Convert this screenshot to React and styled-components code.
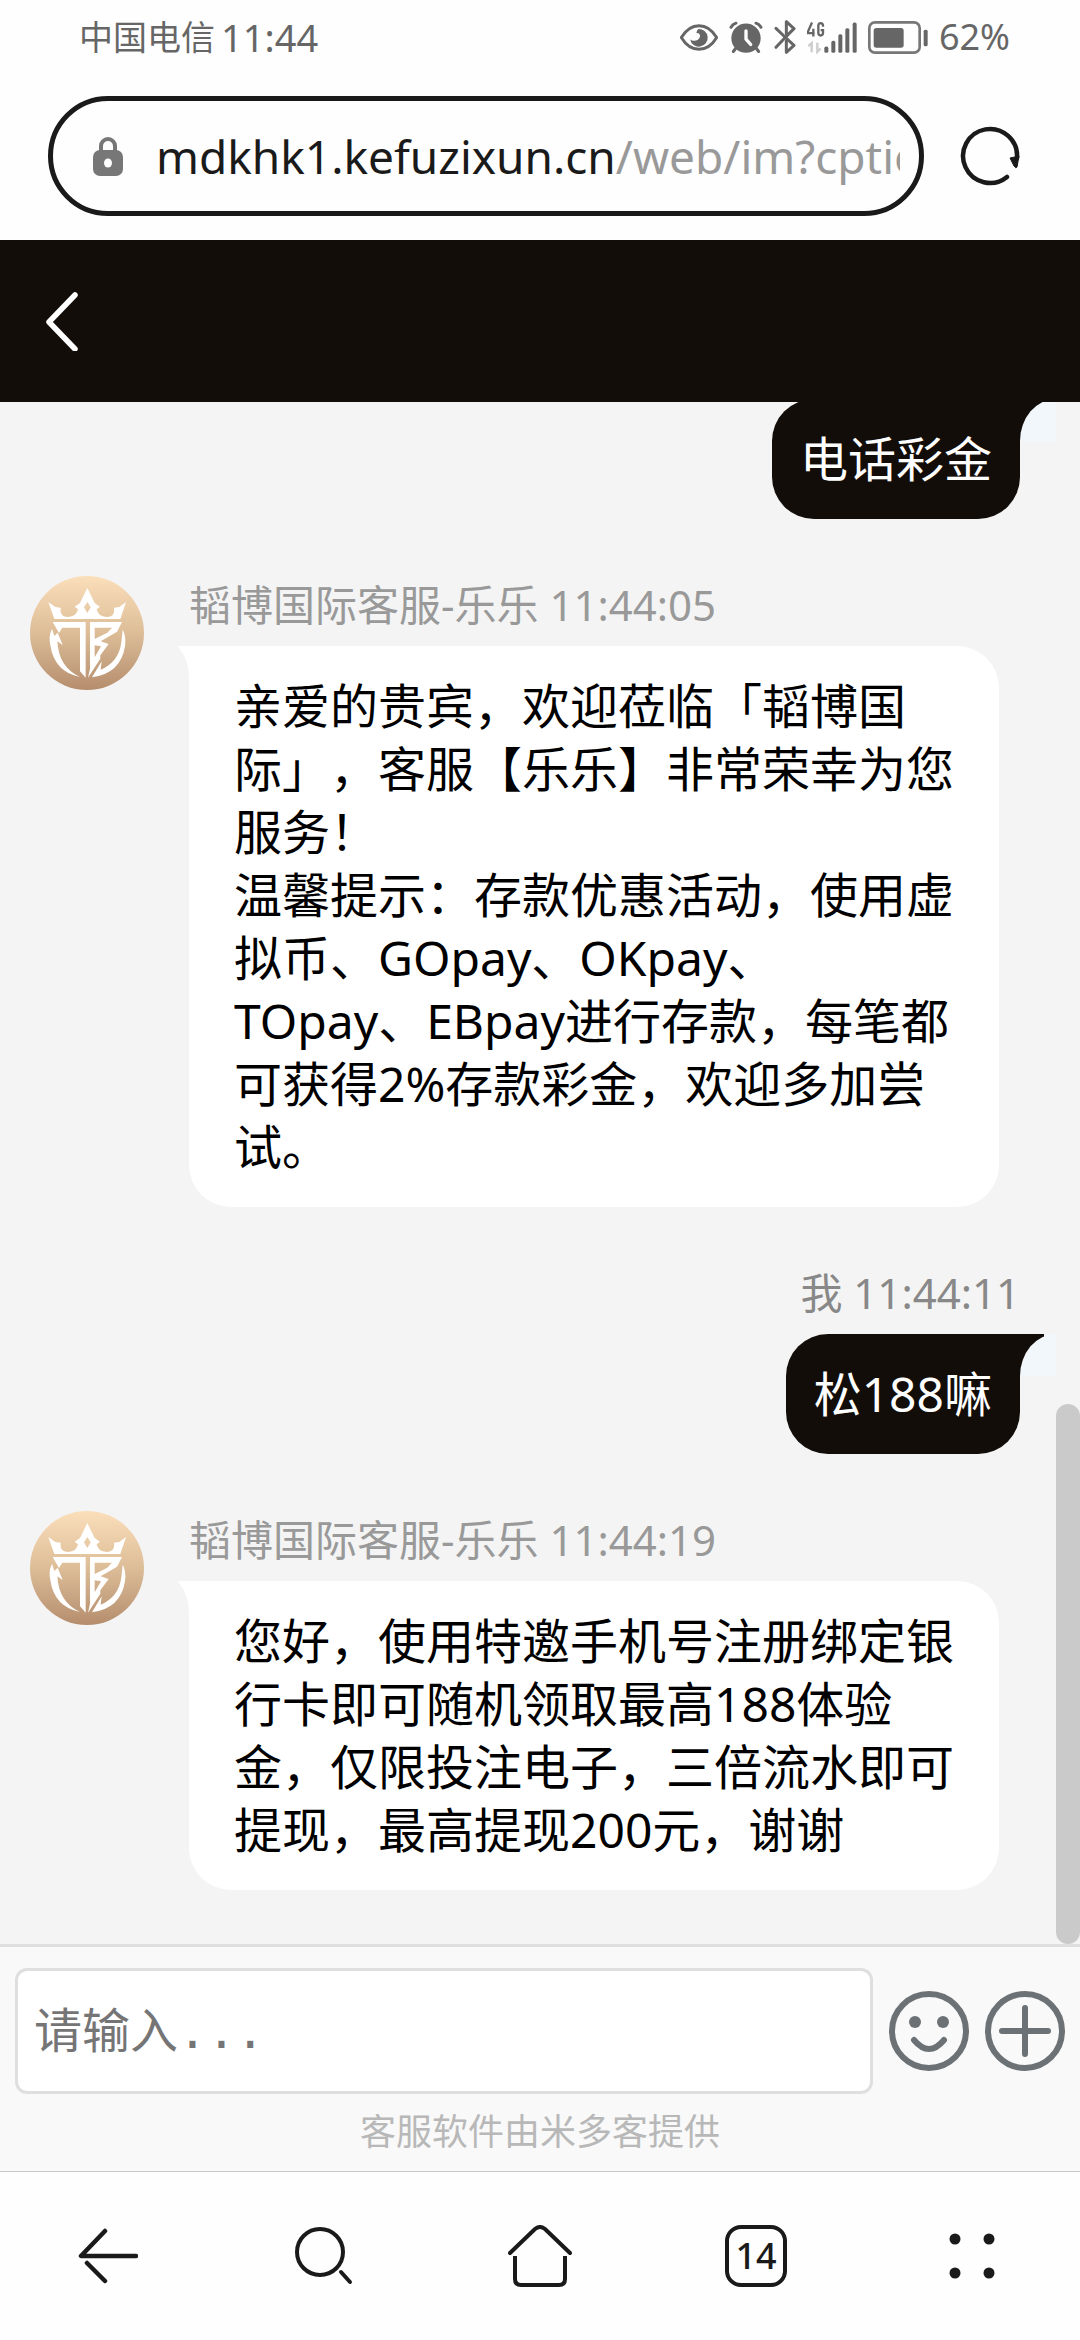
import React from "react";
import styled, { createGlobalStyle } from "styled-components";

const GlobalStyle = createGlobalStyle`
  *, *::before, *::after { box-sizing: border-box; }
  body {
    margin: 0;
    background: #fefefe;
    font-family: "Noto Sans", "Noto Sans CJK SC", sans-serif;
    text-spacing-trim: space-all;
  }
  button {
    margin: 0;
    padding: 0;
    border: 0;
    background: none;
    font: inherit;
    color: inherit;
    cursor: pointer;
  }
  svg { display: block; flex: none; }
`;

const Screen = styled.div`
  display: flex;
  flex-direction: column;
  height: 100vh;
  overflow: hidden;
`;

/* ---------- system status ---------- */

const StatusBar = styled.div`
  display: flex;
  align-items: center;
  justify-content: space-between;
  height: 74px;
  flex: none;
  padding: 0 70px 0 79px;
  color: #666;
`;

const StatusGroup = styled.div`
  display: flex;
  align-items: center;
  gap: ${(p) => p.$gap}px;
`;

const Carrier = styled.span`
  font-size: 34px;
  line-height: 48px;
`;

const Clock = styled.time`
  font-size: 38px;
  line-height: 48px;
`;

const BatteryLevel = styled.span`
  font-size: 36px;
  line-height: 48px;
`;

/* ---------- address bar ---------- */

const AddressRow = styled.div`
  display: flex;
  align-items: center;
  gap: 36px;
  flex: none;
  padding: 22px 60px 24px 48px;
`;

const AddressBox = styled.button`
  flex: 1;
  min-width: 0;
  display: flex;
  align-items: center;
  gap: 33px;
  height: 120px;
  padding: 0 19px 0 40px;
  border: 5px solid #1a1a1a;
  border-radius: 60px;
  text-align: left;
`;

const Url = styled.span`
  flex: 1;
  min-width: 0;
  overflow: hidden;
  white-space: nowrap;
  font-size: 46px;
  line-height: 64px;
  color: #999;
`;

const Host = styled.span`
  color: #1a1a1a;
`;

const ReloadButton = styled.button`
  flex: none;
`;

/* ---------- chat ---------- */

const ChatHeader = styled.header`
  display: flex;
  align-items: center;
  flex: none;
  height: 162px;
  padding: 0 46px;
  background: #120d09;
`;

const Conversation = styled.main`
  position: relative;
  flex: 1;
  min-height: 0;
  display: flex;
  flex-direction: column;
  justify-content: flex-end;
  gap: 57px;
  overflow: hidden;
  padding: 0 60px 54px 30px;
  background: #f4f4f4;
`;

const ScrollThumb = styled.div`
  position: absolute;
  right: 0;
  bottom: 0;
  width: 24px;
  height: 35%;
  border-radius: 12px;
  background: #cacaca;
`;

const Message = styled.article`
  display: flex;
  flex: none;
  align-items: flex-start;
  gap: 45px;
  justify-content: ${(p) => (p.$mine ? "flex-end" : "flex-start")};
`;

const MessageBody = styled.div`
  display: flex;
  flex-direction: column;
  gap: 12px;
  min-width: 0;
  align-items: ${(p) => (p.$mine ? "flex-end" : "flex-start")};
`;

const Sender = styled.div`
  font-size: 42px;
  line-height: 58px;
  color: ${(p) => (p.$mine ? "#888" : "#999")};
`;

const BubbleBase = styled.div`
  position: relative;
  font-size: 48px;
  line-height: 63px;

  &::before,
  &::after {
    content: "";
    position: absolute;
  }
`;

const AgentBubble = styled(BubbleBase)`
  max-width: 810px;
  padding: 28px 45px 29px;
  border-radius: 0 42px 42px 42px;
  background: #fff;
  color: #000;

  &::before {
    top: 0;
    left: -12px;
    width: 12px;
    height: 31px;
    background: #fff;
  }
  &::after {
    top: -11px;
    left: -36px;
    width: 36px;
    height: 42px;
    border-top-right-radius: 100%;
    background: #f4f4f4;
  }
`;

const MyBubble = styled(BubbleBase)`
  padding: 28px 28px 29px;
  border-radius: 42px 0 42px 42px;
  background: #120d09;
  color: #fff;

  &::before {
    top: 0;
    right: -24px;
    width: 24px;
    height: 42px;
    background: #120d09;
  }
  &::after {
    top: 0;
    right: -36px;
    width: 36px;
    height: 42px;
    border-top-left-radius: 100%;
    background: #f2f7fc;
  }
`;

/* ---------- composer ---------- */

const Composer = styled.form`
  flex: none;
  padding: 21px 15px 17px;
  border-top: 3px solid #dfdfdf;
  background: #f9f9f9;
`;

const ComposerRow = styled.div`
  display: flex;
  align-items: center;
  gap: 16px;
`;

const MessageInput = styled.textarea`
  flex: 1;
  min-width: 0;
  height: 126px;
  margin: 0;
  padding: 28px 16px;
  border: 3px solid #dfdfdf;
  border-radius: 12px;
  background: #fff;
  resize: none;
  outline: none;
  overflow: hidden;
  font-family: "DejaVu Sans Mono", "Noto Sans CJK SC", monospace;
  font-size: 48px;
  line-height: 64px;

  &::placeholder {
    color: #757575;
    opacity: 1;
  }
`;

const Provider = styled.div`
  margin-top: 16px;
  text-align: center;
  font-size: 36px;
  line-height: 44px;
  color: #b8b8b8;
`;

/* ---------- browser navigation ---------- */

const BrowserNav = styled.nav`
  display: grid;
  grid-template-columns: repeat(5, 1fr);
  flex: none;
  height: 169px;
  border-top: 1px solid #c8c8c8;
  background: #fefefe;
`;

const NavButton = styled.button`
  display: flex;
  align-items: center;
  justify-content: center;
`;

const TabCount = styled.span`
  display: flex;
  align-items: center;
  justify-content: center;
  width: 62px;
  height: 62px;
  border: 4px solid #1a1a1a;
  border-radius: 16px;
  font-size: 36px;
  line-height: 48px;
  font-weight: 500;
  color: #1a1a1a;
`;

/* ---------- drawings ---------- */

const EyeIcon = () => (
  <svg width="38" height="27" viewBox="62 37 116 82" fill="none">
    <path d="M66 78C95 30 145 30 174 78C145 126 95 126 66 78Z" stroke="#666" strokeWidth="9" strokeLinejoin="round" />
    <path d="M118 52A27 27 0 1 1 93 84C103 92 121 88 123 75C124 66 118 64 112 64Q113 56 118 52Z" fill="#666" />
  </svg>
);

const AlarmIcon = () => (
  <svg width="34" height="33" viewBox="210 29 102 98" fill="none">
    <circle cx="261" cy="80" r="44" fill="#666" />
    <path d="M216 47Q221 38 231 35M306 47Q301 38 291 35" stroke="#666" strokeWidth="9" strokeLinecap="round" />
    <path d="M232 108L223 120M290 108L299 120" stroke="#666" strokeWidth="9" strokeLinecap="round" />
    <path d="M261 58V83L275 99" stroke="#fefefe" strokeWidth="10" strokeLinecap="round" strokeLinejoin="round" />
  </svg>
);

const BluetoothIcon = () => (
  <svg width="22" height="36" viewBox="342 24 66 108" fill="none" stroke="#666" strokeWidth="9" strokeLinecap="round" strokeLinejoin="round">
    <path d="M348 52L375 78L402 103L379 124V90M348 109L375 80L402 53L379 32V68" />
  </svg>
);

const SignalIcon = () => (
  <svg width="50" height="33" viewBox="443 29 150 98">
    <path d="M458 33L446 60V65H466M462 52V75" fill="none" stroke="#666" strokeWidth="7" />
    <path d="M491 46V43Q491 35 484 35Q477 35 477 43V64Q477 72 484 72Q491 72 491 64V56H484" fill="none" stroke="#666" strokeWidth="7" />
    <path d="M447 104L457 95V122M474 94V121L484 111" fill="none" stroke="#ccc" strokeWidth="7" />
    <g fill="#666">
      <rect x="495" y="105" width="12" height="19" rx="5" />
      <rect x="516" y="88" width="12" height="36" rx="5" />
      <rect x="537" y="68" width="12" height="56" rx="5" />
      <rect x="558" y="50" width="12" height="74" rx="5" />
      <rect x="580" y="33" width="12" height="91" rx="5" />
    </g>
  </svg>
);

const BatteryIcon = () => (
  <svg width="60" height="33" viewBox="628 29 180 99">
    <rect x="632" y="33" width="151" height="91" rx="17" fill="none" stroke="#777" strokeWidth="8" />
    <rect x="645" y="50" width="90" height="59" rx="8" fill="#666" />
    <rect x="795" y="55" width="12" height="50" rx="5" fill="#666" />
  </svg>
);

const LockIcon = () => (
  <svg width="30" height="40" viewBox="0 0 30 40">
    <path d="M8 17V10a7 7 0 0 1 14 0V17" fill="none" stroke="#777" strokeWidth="4" />
    <rect x="0" y="14" width="30" height="26" rx="7" fill="#777" />
    <ellipse cx="15" cy="27" rx="4" ry="4.5" fill="#fefefe" />
  </svg>
);

const ReloadIcon = () => (
  <svg width="60" height="60" viewBox="0 0 60 60">
    <path d="M47 51A27 27 0 1 1 57 32" fill="none" stroke="#1a1a1a" strokeWidth="4.5" strokeLinecap="round" />
    <path d="M50 32L59 30L57 41Q56 43 54 40Z" fill="#1a1a1a" stroke="#1a1a1a" strokeWidth="1" strokeLinejoin="round" />
  </svg>
);

const ChevronIcon = () => (
  <svg width="32" height="60" viewBox="0 0 32 60" fill="none" stroke="#fff" strokeWidth="5.5" strokeLinecap="round" strokeLinejoin="round">
    <path d="M29 4L3 31L29 58" />
  </svg>
);

const Avatar = ({ id }) => (
  <svg width="114" height="114" viewBox="90 92 342 342" role="img" aria-label="韬博国际客服">
    <defs>
      <linearGradient id={id} x1="0" y1="0" x2="0" y2="1">
        <stop offset="0" stopColor="#fbdfba" />
        <stop offset="0.5" stopColor="#dcbd98" />
        <stop offset="1" stopColor="#b58d6d" />
      </linearGradient>
    </defs>
    <circle cx="261" cy="263" r="171" fill={`url(#${id})`} />
    <g fill="#fff">
      <path fillRule="evenodd" d="M145 170L166 185L182 187Q178 214 204 215Q230 214 234 192L224 184L240 173L262 128L284 173L300 184L290 192Q294 214 320 215Q346 214 342 187L358 185L378 170L361 221H163ZM262 170L252 186L262 203L272 186Z" />
      <path d="M158 230H257V397L240 378V247H187L177 263Z" />
      <path fillRule="evenodd" d="M270 230H366L351 259L302 288L326 296L301 330V340L264 397L270 370ZM284 247V281L322 262L336 247ZM284 300V336L303 303Z" />
      <path d="M156 250Q145 272 151 300Q163 380 240 395Q176 366 172 288L188 299L173 262L163 272Z" />
      <path d="M368 253Q379 272 375 303Q362 385 276 396L305 348L302 373Q357 350 364 290Z" />
    </g>
  </svg>
);

const SmileIcon = () => (
  <svg width="80" height="80" viewBox="0 0 80 80" fill="none" stroke="#6b7175">
    <circle cx="40" cy="40" r="37" strokeWidth="6" />
    <circle cx="26" cy="31" r="6" fill="#6b7175" stroke="none" />
    <circle cx="54" cy="31" r="6" fill="#6b7175" stroke="none" />
    <path d="M25 49Q40 67 55 49" strokeWidth="6" strokeLinecap="round" />
  </svg>
);

const PlusIcon = () => (
  <svg width="80" height="80" viewBox="0 0 80 80" fill="none" stroke="#6b7175" strokeWidth="6" strokeLinecap="round">
    <circle cx="40" cy="40" r="37" />
    <path d="M40 17V63M17 40H63" />
  </svg>
);

const line = { fill: "none", stroke: "#1a1a1a", strokeWidth: 4, strokeLinecap: "round", strokeLinejoin: "round" };

const BackIcon = () => (
  <svg width="60" height="56" viewBox="0 0 60 56" {...line} strokeWidth="4.5">
    <path d="M27 3L3 28H58M27 53L9 35" />
  </svg>
);

const SearchIcon = () => (
  <svg width="58" height="60" viewBox="0 0 58 60" {...line}>
    <circle cx="25" cy="26" r="23" />
    <path d="M46 46L55 56" />
  </svg>
);

const HomeIcon = () => (
  <svg width="64" height="62" viewBox="0 0 64 62" {...line}>
    <path d="M2 28L27 4Q32 0 37 4L62 28" />
    <path d="M7 31V54Q7 60 13 60H51Q57 60 57 54V31" strokeLinecap="butt" />
  </svg>
);

const MenuIcon = () => (
  <svg width="46" height="46" viewBox="0 0 46 46" fill="#1a1a1a">
    <circle cx="6" cy="6" r="5.5" />
    <circle cx="40" cy="6" r="5.5" />
    <circle cx="6" cy="40" r="5.5" />
    <circle cx="40" cy="40" r="5.5" />
  </svg>
);

/* ---------- data ---------- */

const messages = [
  { mine: true, text: "电话彩金" },
  {
    sender: "韬博国际客服-乐乐 11:44:05",
    text: [
      "亲爱的贵宾，欢迎莅临「韬博国际」，客服【乐乐】非常荣幸为您服务！",
      "温馨提示：存款优惠活动，使用虚拟币、GOpay、OKpay、TOpay、EBpay进行存款，每笔都可获得2%存款彩金，欢迎多加尝试。",
    ],
  },
  { mine: true, sender: "我 11:44:11", text: "松188嘛" },
  {
    sender: "韬博国际客服-乐乐 11:44:19",
    text: ["您好，使用特邀手机号注册绑定银行卡即可随机领取最高188体验金，仅限投注电子，三倍流水即可提现，最高提现200元，谢谢"],
  },
];

export default function App() {
  return (
    <>
      <GlobalStyle />
      <Screen lang="zh-CN">
        <StatusBar>
          <StatusGroup $gap={6}>
            <Carrier>中国电信</Carrier>
            <Clock>11:44</Clock>
          </StatusGroup>
          <StatusGroup $gap={11}>
            <EyeIcon />
            <AlarmIcon />
            <BluetoothIcon />
            <SignalIcon />
            <BatteryIcon />
            <BatteryLevel>62%</BatteryLevel>
          </StatusGroup>
        </StatusBar>

        <AddressRow>
          <AddressBox type="button">
            <LockIcon />
            <Url>
              <Host>mdkhk1.kefuzixun.cn</Host>/web/im?cptio
            </Url>
          </AddressBox>
          <ReloadButton type="button" aria-label="刷新">
            <ReloadIcon />
          </ReloadButton>
        </AddressRow>

        <ChatHeader>
          <button type="button" aria-label="返回">
            <ChevronIcon />
          </button>
        </ChatHeader>

        <Conversation>
          {messages.map((m, i) => (
            <Message key={i} $mine={m.mine}>
              {!m.mine && <Avatar id={`avatar-${i}`} />}
              <MessageBody $mine={m.mine}>
                {m.sender && <Sender $mine={m.mine}>{m.sender}</Sender>}
                {m.mine ? (
                  <MyBubble>{m.text}</MyBubble>
                ) : (
                  <AgentBubble>
                    {m.text.map((t) => (
                      <div key={t}>{t}</div>
                    ))}
                  </AgentBubble>
                )}
              </MessageBody>
            </Message>
          ))}
          <ScrollThumb />
        </Conversation>

        <Composer>
          <ComposerRow>
            <MessageInput rows={1} aria-label="请输入" placeholder="请输入..." />
            <button type="button" aria-label="表情">
              <SmileIcon />
            </button>
            <button type="button" aria-label="更多">
              <PlusIcon />
            </button>
          </ComposerRow>
          <Provider>客服软件由米多客提供</Provider>
        </Composer>

        <BrowserNav>
          <NavButton type="button" aria-label="后退">
            <BackIcon />
          </NavButton>
          <NavButton type="button" aria-label="搜索">
            <SearchIcon />
          </NavButton>
          <NavButton type="button" aria-label="主页">
            <HomeIcon />
          </NavButton>
          <NavButton type="button" aria-label="标签页">
            <TabCount>14</TabCount>
          </NavButton>
          <NavButton type="button" aria-label="菜单">
            <MenuIcon />
          </NavButton>
        </BrowserNav>
      </Screen>
    </>
  );
}
